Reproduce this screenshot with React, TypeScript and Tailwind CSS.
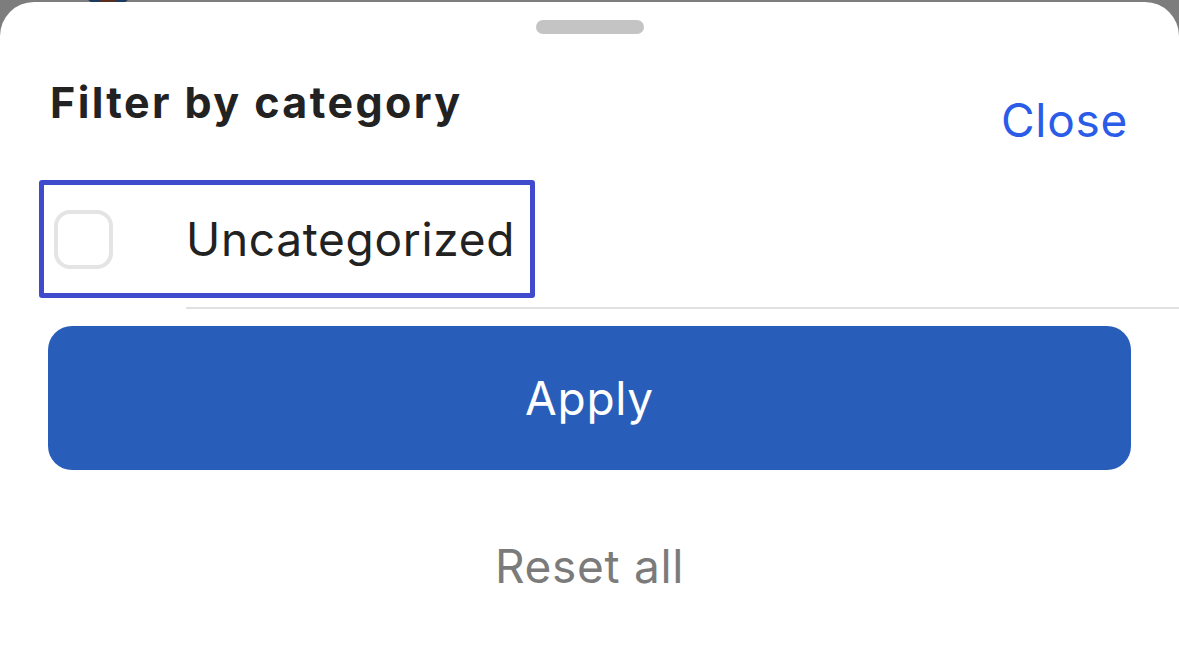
const App = () => {
  return (
    <div className="w-[1179px] h-[664px] bg-[#7d7d7d] overflow-hidden relative font-['Inter','Noto_Sans',sans-serif]">
      {/* Content peeking behind the sheet */}
      <div className="absolute top-[-30px] left-[82px] w-[52px] h-[34px] rounded-full bg-[#1d3a5e]">
        <div className="mx-auto mt-[26px] w-[16px] h-[8px] rounded-full bg-[#5a2e1e]" />
      </div>

      {/* Bottom sheet */}
      <div className="relative mt-[2px] h-[662px] bg-white rounded-t-[34px]">
        {/* Drag handle */}
        <div className="flex justify-center pt-[18px]">
          <div className="w-[108px] h-[14px] rounded-full bg-[#c4c4c4]" />
        </div>

        {/* Header */}
        <div className="flex justify-between items-start pl-[50px] pr-[51px] mt-[48px]">
          <h2 className="text-[43px] leading-[41px] font-bold text-[#222222] tracking-[2.4px]">Filter by category</h2>
          <button className="mt-[15px] text-[46px] leading-[46px] tracking-[0.7px] text-[#2a5ce8]">Close</button>
        </div>

        {/* Category list */}
        <div className="mt-[37px]">
          <div className="ml-[39px] w-[496px] h-[118px] flex items-center border-[5px] border-[#3f4acc] rounded-[3px] pl-[10px]">
            <div className="w-[59px] h-[59px] rounded-[16px] border-[4px] border-[#e4e4e4] bg-white" />
            <span className="ml-[73px] text-[46px] leading-[46px] tracking-[0.7px] text-[#222222]">Uncategorized</span>
          </div>
          <div className="ml-[186px] mt-[9px] h-[2px] bg-[#e0e0e0]" />
        </div>

        {/* Actions */}
        <div className="px-[48px] mt-[17px]">
          <button className="w-full h-[144px] rounded-[24px] bg-[#285eb9] text-white text-[46px] leading-[46px] tracking-[0.7px]">
            Apply
          </button>
        </div>
        <div className="flex justify-center mt-[73px]">
          <button className="text-[46px] leading-[46px] tracking-[0.7px] text-[#7b7b7b]">Reset all</button>
        </div>
      </div>
    </div>
  );
};

export default App;
